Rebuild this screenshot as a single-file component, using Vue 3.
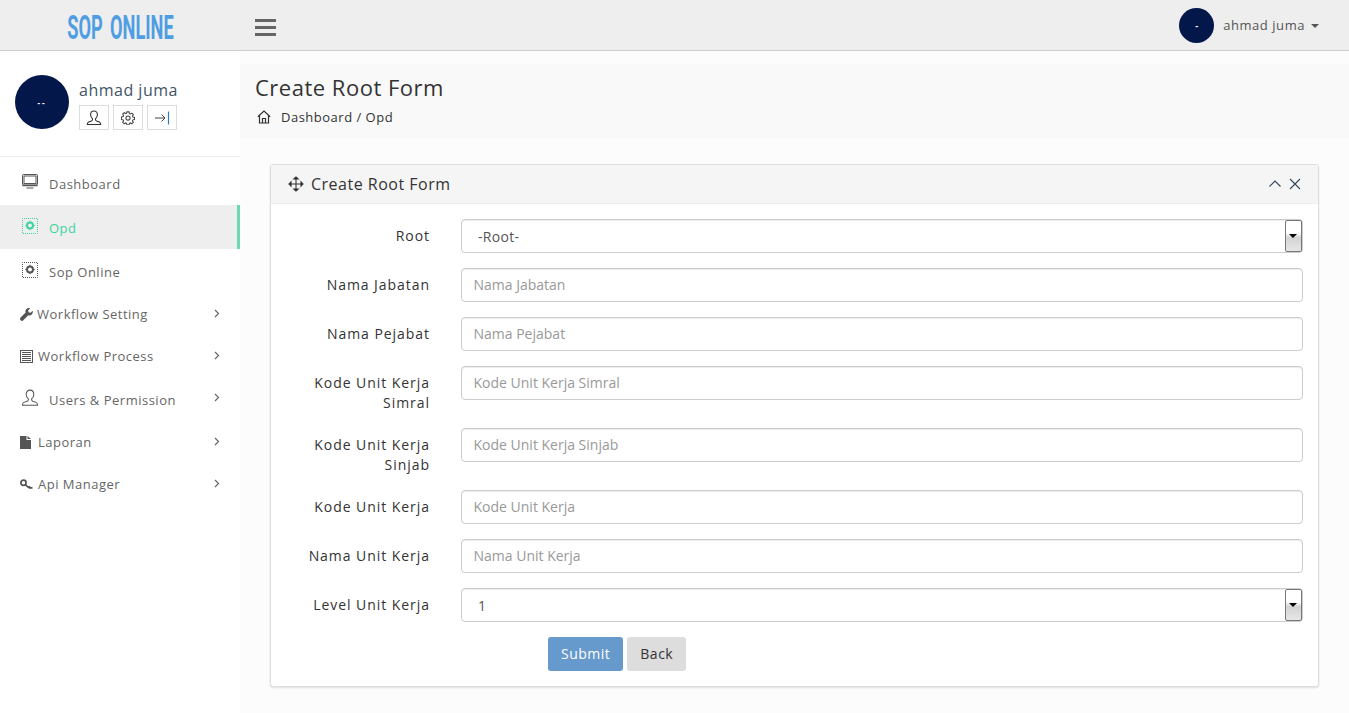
<template>
  <div class="layout">
    <header class="topbar">
      <div class="brand"><span class="brand-text">SOP ONLINE</span></div>
      <div class="burger"><span></span><span></span><span></span></div>
      <div class="top-user">
        <div class="avatar avatar-sm">-</div>
        <span class="top-name">ahmad juma</span>
        <span class="caret"></span>
      </div>
    </header>

    <div class="body">
      <aside class="sidebar">
        <div class="profile">
          <div class="avatar avatar-lg">--</div>
          <div class="profile-info">
            <div class="profile-name">ahmad juma</div>
            <div class="profile-btns">
              <a class="profile-btn">
                <svg width="16" height="16" viewBox="0 0 16 16" fill="none" stroke="#333" stroke-width="1.100"><path d="M8 1c-2.200 0-3.400 1.600-3.400 3.800 0 1.700.8 3.200 1.900 3.900v1.100c0 .5-.4.8-1 1.100l-2.900 1c-.9.4-1.300 1-1.300 2.600h13.400c0-1.600-.4-2.200-1.300-2.600l-2.900-1c-.6-.3-1-.6-1-1.100V8.700c1.100-.7 1.900-2.200 1.900-3.900C11.400 2.600 10.200 1 8 1z"/></svg>
              </a>
              <a class="profile-btn">
                <svg width="14" height="14" viewBox="0 0 16 16" fill="none" stroke="#444" stroke-width="1.200"><circle cx="8" cy="8" r="2.400"/><path d="M6.800 1h2.400l.4 1.900 1.200.5 1.600-1 1.700 1.700-1 1.600.5 1.200 1.900.4v2.400l-1.900.4-.5 1.200 1 1.600-1.700 1.700-1.600-1-1.200.5-.4 1.900H6.800l-.4-1.900-1.200-.5-1.600 1-1.700-1.700 1-1.600-.5-1.200-1.900-.4V6.800l1.900-.4.5-1.200-1-1.600 1.700-1.700 1.600 1 1.200-.5z"/></svg>
              </a>
              <a class="profile-btn">
                <svg width="16" height="16" viewBox="0 0 16 16" fill="none" stroke="#444" stroke-width="1"><path d="M1 8h10M7.500 4.500 11 8l-3.500 3.500"/><path d="M14.500 1.500v13" stroke="#3a79b8" stroke-width="1.200"/></svg>
              </a>
            </div>
          </div>
        </div>

        <ul class="menu">
          <li v-for="item in menu" :key="item.label" class="menu-item" :class="{ active: item.active, small: item.small, tight: item.icon === 'wrench' }">
            <span class="menu-icon">
              <svg v-if="item.icon === 'screen'" width="18" height="18" viewBox="0 0 18 18" fill="none" stroke="currentColor"><rect x="1.500" y="1.500" width="15" height="10.500" rx="1"/><rect x="3" y="3" width="12" height="7.500" stroke-width="1"/><path d="M5.500 15h7"/><path d="M1.500 12.500h15" stroke-width="1.500"/></svg>
              <svg v-else-if="item.icon === 'dotted'" width="18" height="18" viewBox="0 0 18 18" fill="none" stroke="currentColor"><rect x="1.500" y="1.500" width="15" height="15" stroke-dasharray="1 1" stroke-dashoffset=".5"/><circle cx="9" cy="8.500" r="3" stroke-width="2"/><path d="M9 3.800v1.500M9 11.700v1.500M4.300 8.500h1.500M12.200 8.500h1.500" stroke-width="1"/></svg>
              <svg v-else-if="item.icon === 'user'" width="18" height="18" viewBox="0 0 16 16" fill="none" stroke="currentColor" stroke-width=".9"><path d="M8 1c-2.200 0-3.400 1.600-3.400 3.800 0 1.700.8 3.200 1.900 3.900v1.100c0 .5-.4.8-1 1.100l-2.900 1c-.9.4-1.300 1-1.300 2.600h13.400c0-1.600-.4-2.200-1.300-2.600l-2.900-1c-.6-.3-1-.6-1-1.100V8.700c1.100-.7 1.900-2.200 1.900-3.900C11.400 2.600 10.200 1 8 1z"/></svg>
              <svg v-else-if="item.icon === 'wrench'" width="13" height="13" viewBox="0 0 13 13" fill="currentColor"><path d="M12.600 2.700 10.500 4.800 8.600 4.300 8.100 2.400 10.200.3C8.800-.2 7.300.1 6.400 1.100 5.500 2 5.200 3.400 5.600 4.600L.6 9.600c-.7.700-.7 1.900 0 2.700.8.800 2 .8 2.700 0l5-5c1.200.4 2.600.1 3.500-.8 1-.9 1.300-2.400.8-3.800z"/></svg>
              <svg v-else-if="item.icon === 'list'" width="13" height="13" viewBox="0 0 13 13"><rect x=".5" y=".5" width="12" height="12" fill="none" stroke="currentColor"/><path d="M2 2.500h9M2 4.500h9M2 6.500h9M2 8.500h9M2 10.500h9" stroke="currentColor" stroke-width="1"/></svg>
              <svg v-else-if="item.icon === 'file'" width="11" height="13" viewBox="0 0 11 13" fill="currentColor"><path d="M0 0h6.500v4H11v9H0z"/><path d="M7.500 0 11 3H7.500z"/></svg>
              <svg v-else-if="item.icon === 'key'" width="13" height="11" viewBox="0 0 13 11" fill="none" stroke="currentColor" stroke-width="1.700"><circle cx="3.500" cy="3.800" r="2.600"/><path d="M5.500 5.800 9 8.800M9 8.800l1-1.600M9 8.800h3.500"/></svg>
            </span>
            <span class="menu-label">{{ item.label }}</span>
            <svg v-if="item.sub" class="chev" width="6" height="9" viewBox="0 0 6 9" fill="none" stroke="#666" stroke-width="1.200"><path d="M1 1l3.500 3.500L1 8"/></svg>
          </li>
        </ul>
      </aside>

      <main class="main">
        <div class="page-head">
          <h1>Create Root Form</h1>
          <div class="crumbs">
            <svg width="14" height="14" viewBox="0 0 14 14" fill="none" stroke="#333" stroke-width="1.200"><path d="M.8 6.800 7 1l6.200 5.800"/><path d="M2.500 5.500V13h9V5.500"/><path d="M5.500 13V8.500h3V13"/></svg>
            <span>Dashboard / Opd</span>
          </div>
        </div>

        <section class="panel">
          <div class="panel-head">
            <svg width="16" height="16" viewBox="0 0 16 16" fill="none" stroke="#333" stroke-width="1.100"><path d="M8 1v14M1 8h14"/><path d="M5.800 3 8 1l2.200 2zM5.800 13 8 15l2.200-2zM3 5.800 1 8l2 2.200zM13 5.800 15 8l-2 2.200z" fill="#333"/></svg>
            <span class="panel-title">Create Root Form</span>
            <span class="panel-tools">
              <svg width="12" height="12" viewBox="0 0 12 12" fill="none" stroke="#345" stroke-width="1.100"><path d="M.5 8.500 6 3l5.500 5.500"/></svg>
              <svg width="12" height="12" viewBox="0 0 12 12" fill="none" stroke="#345" stroke-width="1.100"><path d="M1 1l10 10M11 1 1 11"/></svg>
            </span>
          </div>
          <form class="panel-body" @submit.prevent>
            <div v-for="f in fields" :key="f.label" class="form-row">
              <label>{{ f.label }}</label>
              <div class="field">
                <div v-if="f.options" class="select-wrap">
                  <select class="control select"><option v-for="o in f.options" :key="o">{{ o }}</option></select>
                  <span class="select-btn"><i></i></span>
                </div>
                <input v-else class="control" type="text" :placeholder="f.label">
              </div>
            </div>
            <div class="actions">
              <button class="btn btn-primary" type="submit">Submit</button>
              <button class="btn btn-back" type="button">Back</button>
            </div>
          </form>
        </section>
      </main>
    </div>
  </div>
</template>

<script setup>
const menu = [
  { label: 'Dashboard', icon: 'screen' },
  { label: 'Opd', icon: 'dotted', active: true },
  { label: 'Sop Online', icon: 'dotted' },
  { label: 'Workflow Setting', icon: 'wrench', small: true, sub: true },
  { label: 'Workflow Process', icon: 'list', small: true, sub: true },
  { label: 'Users & Permission', icon: 'user', sub: true },
  { label: 'Laporan', icon: 'file', small: true, sub: true },
  { label: 'Api Manager', icon: 'key', small: true, sub: true }
]

const fields = [
  { label: 'Root', options: ['-Root-'] },
  { label: 'Nama Jabatan' },
  { label: 'Nama Pejabat' },
  { label: 'Kode Unit Kerja Simral' },
  { label: 'Kode Unit Kerja Sinjab' },
  { label: 'Kode Unit Kerja' },
  { label: 'Nama Unit Kerja' },
  { label: 'Level Unit Kerja', options: ['1'] }
]
</script>

<style>
html, body {
  margin: 0;
  height: 100%;
  overflow: hidden;
}
</style>

<style scoped>
.layout {
  height: 713px;
  display: flex;
  flex-direction: column;
  font-family: "Open Sans", "Liberation Sans", sans-serif;
  font-size: 14px;
  color: #333;
  background: #fcfcfc;
}

.topbar {
  height: 51px;
  box-sizing: border-box;
  flex: none;
  display: flex;
  align-items: center;
  background: #eee;
  border-bottom: 1px solid #ccc;
}

.brand {
  width: 240px;
  flex: none;
  display: flex;
  justify-content: center;
  padding-top: 3px;
  box-sizing: border-box;
}

.brand-text {
  display: inline-block;
  font-family: "Roboto", "Liberation Sans", sans-serif;
  font-weight: 700;
  font-size: 20px;
  line-height: 26px;
  word-spacing: 3px;
  color: #4f9ee3;
  transform: scale(.91, 1.7);
}

.burger {
  margin-left: 15px;
  margin-top: 5px;
  width: 21px;
  display: flex;
  flex-direction: column;
  gap: 4px;
}

.burger span {
  display: block;
  height: 3px;
  background: #666;
}

.top-user {
  margin-left: auto;
  margin-right: 30px;
  display: flex;
  align-items: center;
}

.top-name {
  margin-left: 9px;
  font-size: 13px;
  letter-spacing: .55px;
  color: #555;
}

.caret {
  margin-left: 6px;
  margin-top: 2px;
  border-top: 4px solid #555;
  border-left: 4px solid transparent;
  border-right: 4px solid transparent;
}

.avatar {
  flex: none;
  border-radius: 50%;
  background: #04174a;
  color: #fff;
  display: flex;
  align-items: center;
  justify-content: center;
  font-weight: 700;
}

.avatar-sm {
  width: 35px;
  height: 35px;
  font-size: 9px;
}

.avatar-lg {
  width: 54px;
  height: 54px;
  font-size: 8px;
  letter-spacing: 2px;
}

.body {
  flex: 1;
  display: flex;
  min-height: 0;
}

.sidebar {
  width: 240px;
  flex: none;
  background: #fff;
}

.profile {
  height: 106px;
  box-sizing: border-box;
  padding: 24px 15px 0;
  display: flex;
  gap: 10px;
  border-bottom: 1px solid #eee;
}

.profile-name {
  margin-top: 3px;
  font-size: 16px;
  line-height: 24px;
  letter-spacing: .5px;
  color: #3f5566;
}

.profile-btns {
  margin-top: 3px;
  display: flex;
  gap: 4px;
}

.profile-btn {
  width: 30px;
  height: 25px;
  box-sizing: border-box;
  border: 1px solid #ddd;
  display: flex;
  align-items: center;
  justify-content: center;
}

.menu {
  list-style: none;
  margin: 4px 0 0;
  padding: 0;
}

.menu-item {
  height: 44px;
  box-sizing: border-box;
  padding: 2px 20px 0 21px;
  display: flex;
  align-items: center;
  font-size: 13px;
  letter-spacing: .5px;
  color: #666;
}

.menu-item.small {
  height: 42px;
  padding-top: 0;
  padding-left: 20px;
}

.menu-item.active {
  background: #eee;
  color: #3dd3a0;
  border-right: 3px solid #6dd9b4;
  padding-right: 17px;
}

.menu-icon {
  width: 28px;
  flex: none;
  display: flex;
  align-items: center;
  margin-top: -4px;
  color: #555;
}

.active .menu-icon {
  color: #3dd3a0;
}

.small .menu-icon {
  width: 18px;
  margin-top: 0;
}

.tight .menu-icon {
  width: 17px;
}

.chev {
  margin-left: auto;
  margin-top: -5px;
}

.small .chev {
  margin-top: -1px;
}

.main {
  flex: 1;
  min-width: 0;
}

.page-head {
  margin-top: 13px;
  height: 74px;
  box-sizing: border-box;
  padding: 8px 15px 0;
  background: #f9f9f9;
}

.page-head h1 {
  margin: 0;
  font-size: 22px;
  font-weight: 400;
  line-height: 30px;
  letter-spacing: .5px;
  color: #333;
}

.crumbs {
  margin-top: 6px;
  display: flex;
  align-items: center;
  gap: 10px;
  padding-left: 2px;
  font-size: 13px;
  line-height: 18px;
  letter-spacing: .5px;
}

.panel {
  margin: 26px 30px 0;
  background: #fff;
  border: 1px solid #ddd;
  border-radius: 3px;
  box-shadow: 0 1px 2px rgba(0, 0, 0, .12);
}

.panel-head {
  height: 39px;
  box-sizing: border-box;
  padding: 0 17px;
  display: flex;
  align-items: center;
  background: #f5f5f5;
  border-bottom: 1px solid #eee;
}

.panel-title {
  margin-left: 7px;
  font-size: 16px;
  letter-spacing: .5px;
}

.panel-tools {
  margin-left: auto;
  display: flex;
  gap: 8px;
}

.panel-body {
  padding: 15px 15px 15px 0;
}

.form-row {
  display: flex;
  margin-bottom: 15px;
}

.form-row label {
  width: 159px;
  margin-right: 31px;
  flex: none;
  box-sizing: border-box;
  padding-top: 7px;
  padding-left: 20px;
  text-align: right;
  line-height: 20px;
  letter-spacing: .95px;
}

.field {
  flex: 1;
}

.select-wrap {
  position: relative;
}

.control {
  display: block;
  width: 100%;
  height: 34px;
  box-sizing: border-box;
  padding: 5px 12px 7px 11.500px;
  border: 1px solid #ccc;
  border-radius: 4px;
  background: #fff;
  font-family: inherit;
  font-size: 14px;
  color: #555;
  box-shadow: inset 0 1px 1px rgba(0, 0, 0, .075);
  outline: none;
}

.control::placeholder {
  color: #999;
  opacity: 1;
}

.select {
  appearance: none;
  padding: 6px 12px 6px 16px;
  letter-spacing: .3px;
}

.select-btn {
  position: absolute;
  top: 1px;
  right: 1px;
  width: 17px;
  height: 32px;
  box-sizing: border-box;
  border: 1px solid #777;
  border-radius: 2px;
  background: linear-gradient(#fff 40%, #d4d4d4 55%, #e6e6e6);
}

.select-btn i {
  position: absolute;
  left: 3px;
  top: 13px;
  border-top: 4px solid #000;
  border-left: 4px solid transparent;
  border-right: 4px solid transparent;
}

.actions {
  display: flex;
  gap: 4px;
  margin-left: 277px;
}

.btn {
  height: 34px;
  padding: 5px 12px 7px;
  border: 1px solid transparent;
  border-radius: 3px;
  font-family: inherit;
  font-size: 14px;
  letter-spacing: .5px;
}

.btn-primary {
  background: #6699cc;
  color: #fff;
}

.btn-back {
  background: #ddd;
  color: #333;
}
</style>
